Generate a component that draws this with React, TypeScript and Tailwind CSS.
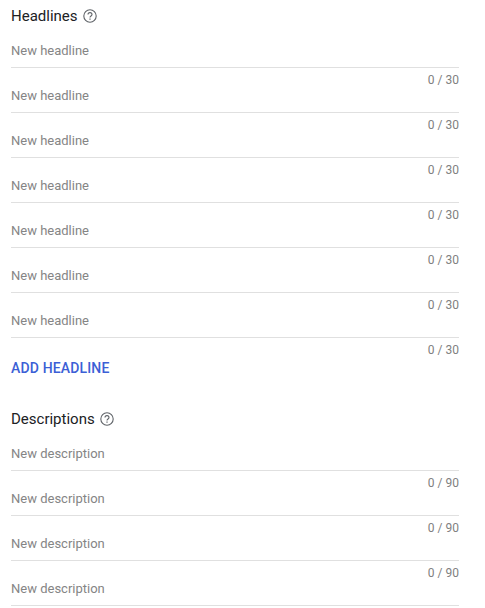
import { useState } from "react";

const HEADLINE_LIMIT = 30;
const DESCRIPTION_LIMIT = 90;

type AssetFieldProps = {
  label: string;
  limit: number;
  showCounter?: boolean;
};

const AssetField = ({ label, limit, showCounter = true }: AssetFieldProps) => {
  const [value, setValue] = useState("");

  return (
    <div className="h-[45px]">
      <input
        type="text"
        value={value}
        maxLength={limit}
        placeholder={label}
        aria-label={label}
        onChange={(e) => setValue(e.target.value)}
        className="block h-[26px] w-full border-b border-[#e0e0e0] pb-[9px] text-[13px] leading-4 text-gray-800 outline-none placeholder:text-[#858585]"
      />
      {showCounter && (
        <div className="pt-1 text-right text-xs leading-4 text-[#808080]">
          {value.length} / {limit}
        </div>
      )}
    </div>
  );
};

const HelpIcon = () => {
  return (
    <svg viewBox="0 0 14 14" fill="none" stroke="currentColor" className="size-3.5 text-[#5f6368]">
      <circle cx="7" cy="7" r="6.2" strokeWidth="1.1" />
      <path d="M5 5.6a2 2 0 0 1 4 0c0 1.3-2 1.5-2 2.9" strokeWidth="1.1" />
      <path d="M7 9.6v1.2" strokeWidth="1.2" />
    </svg>
  );
};

const SectionTitle = ({ title }: { title: string }) => {
  return (
    <div className="flex h-5 items-center gap-[5px]">
      <h2 className="text-[15px] leading-5 text-[#202124]">{title}</h2>
      <HelpIcon />
    </div>
  );
};

const App = () => {
  const headlines = [1, 2, 3, 4, 5, 6, 7];
  const descriptions = [1, 2, 3, 4];

  return (
    <div className="h-[608px] overflow-hidden bg-white pt-1.5 pr-[26px] pl-[11px] font-[Roboto,sans-serif]">
      <SectionTitle title="Headlines" />
      <div className="pt-4">
        {headlines.map((id) => (
          <AssetField key={id} label="New headline" limit={HEADLINE_LIMIT} />
        ))}
      </div>
      <button className="mt-[1px] block h-5 text-sm leading-5 font-medium tracking-[0.15px] text-[#3c5fd6]">
        ADD HEADLINE
      </button>

      <div className="pt-[31px]">
        <SectionTitle title="Descriptions" />
        <div className="pt-4">
          {descriptions.map((id) => (
            <AssetField
              key={id}
              label="New description"
              limit={DESCRIPTION_LIMIT}
              showCounter={id < descriptions.length}
            />
          ))}
        </div>
      </div>
    </div>
  );
};

export default App;
